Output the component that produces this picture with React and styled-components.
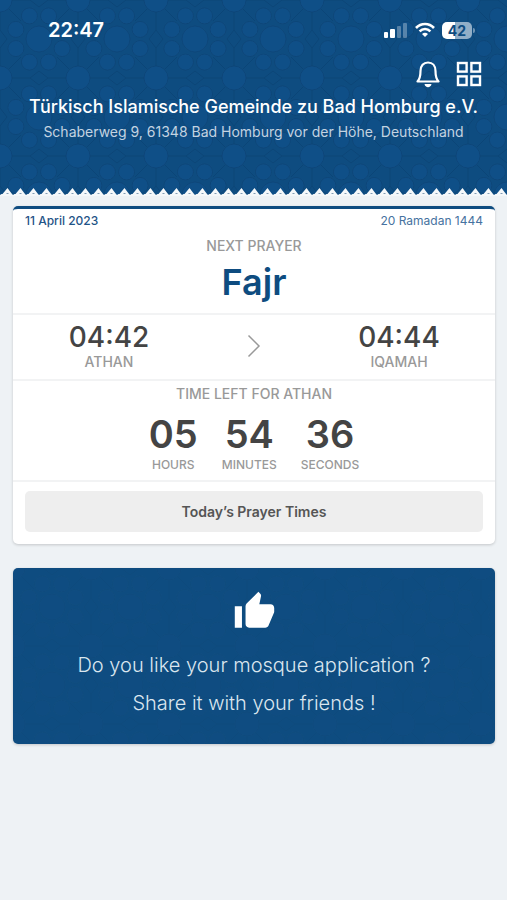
import React from 'react'
import { styled, createGlobalStyle } from 'styled-components';
import { MdThumbUp } from 'react-icons/md';

const countdown = [
  { value: '05', label: 'HOURS' },
  { value: '54', label: 'MINUTES' },
  { value: '36', label: 'SECONDS' },
];

// big rosette in the middle of the tile, small ones around it
const ring = Array.from({ length: 8 }, (_, i) => {
  const a = (i * Math.PI) / 4 + Math.PI / 8;
  return { x: 39 + Math.cos(a) * 25, y: 39 + Math.sin(a) * 25 };
});

const Pattern = ({ id, opacity }) => (
  <PatternSvg aria-hidden="true">
    <defs>
      <pattern id={id} width="78" height="78" patternUnits="userSpaceOnUse">
        <g fill="#125390" fillOpacity={opacity} stroke="#083a68" strokeOpacity={opacity}>
          <circle cx="39" cy="39" r="13" />
          {ring.map((c) => <circle key={`${c.x}-${c.y}`} cx={c.x} cy={c.y} r="8" />)}
          <circle cx="0" cy="0" r="12" />
          <circle cx="78" cy="0" r="12" />
          <circle cx="0" cy="78" r="12" />
          <circle cx="78" cy="78" r="12" />
          <path d="M0 12v18l7 9-7 9v18M78 12v18l-7 9 7 9v18M12 0h18l9 7 9-7h18M12 78h18l9-7 9 7h18M9 9l12 12M69 9L57 21M9 69l12-12M69 69L57 57" fill="none" />
        </g>
      </pattern>
    </defs>
    <rect width="100%" height="100%" fill={`url(#${id})`} />
  </PatternSvg>
);

const Signal = () => (
  <svg width="24" height="16" viewBox="0 0 24 16" fill="#fff" aria-hidden="true">
    <rect x="0" y="10" width="4" height="6" rx="1" />
    <rect x="6" y="7" width="5" height="9" rx="1" />
    <rect x="13" y="4" width="4" height="12" rx="1" opacity="0.3" />
    <rect x="19" y="1" width="4" height="15" rx="1" opacity="0.3" />
  </svg>
);

const Wifi = () => (
  <svg width="20" height="16" viewBox="0 0 20 16" fill="none" stroke="#fff" strokeWidth="2.6" aria-hidden="true">
    <path d="M1 6C6 .6 14 .6 19 6" />
    <path d="M4.6 9.4C7.8 6.2 12.2 6.2 15.4 9.4" />
    <path d="M7 12Q10 9.6 13 12L10 15Z" fill="#fff" stroke="none" />
  </svg>
);

const Bell = () => (
  <svg width="24" height="28" viewBox="1 0 24 28" fill="none" stroke="#fff" strokeWidth="2.2" strokeLinejoin="round" aria-hidden="true">
    <path d="M2.500 21.500C4.800 19 5.500 17 5.500 11C5.500 5.500 8.500 2.500 13 2.500S20.500 5.500 20.500 11C20.500 17 21.200 19 23.500 21.500Z" />
    <path d="M9.500 24H16.500C16 28.200 10 28.200 9.500 24Z" fill="#fff" stroke="none" />
  </svg>
);

const Grid = () => (
  <svg width="26" height="26" viewBox="0 0 26 26" fill="none" stroke="#fff" strokeWidth="2.4" aria-hidden="true">
    <rect x="2" y="2" width="8.600" height="8.600" />
    <rect x="15.400" y="2" width="8.600" height="8.600" />
    <rect x="2" y="15.400" width="8.600" height="8.600" />
    <rect x="15.400" y="15.400" width="8.600" height="8.600" />
  </svg>
);

const Lace = () => (
  <LaceSvg aria-hidden="true">
    <defs>
      <pattern id="lace" width="13" height="8" patternUnits="userSpaceOnUse">
        <path d="M0 7L1.500 6L2.500 6L7.500 0L12 6L13 7V8H0Z" fill="#f5f8fa" />
        <path d="M6.500 5h2v1h-2z" fill="#7f9ab2" />
      </pattern>
    </defs>
    <rect width="100%" height="8" fill="url(#lace)" />
  </LaceSvg>
);

const App = () => {
  return (
    <Page>
      <GlobalStyle />
      <Header>
        <Pattern id="header-pattern" opacity="0.4" />
        <StatusBar>
          <Clock>22:47</Clock>
          <StatusIcons>
            <Signal />
            <Wifi />
            <Battery>42</Battery>
          </StatusIcons>
        </StatusBar>
        <Actions>
          <IconButton aria-label="Notifications"><Bell /></IconButton>
          <IconButton aria-label="Menu"><Grid /></IconButton>
        </Actions>
        <Title>Türkisch Islamische Gemeinde zu Bad Homburg e.V.</Title>
        <Address>Schaberweg 9, 61348 Bad Homburg vor der Höhe, Deutschland</Address>
        <Lace />
      </Header>
      <Main>
        <Card>
          <Dates>
            <Today>11 April 2023</Today>
            <Hijri>20 Ramadan 1444</Hijri>
          </Dates>
          <Next>
            <Label>NEXT PRAYER</Label>
            <Prayer>Fajr</Prayer>
          </Next>
          <Times>
            <Slot>
              <Time>04:42</Time>
              <Label>ATHAN</Label>
            </Slot>
            <svg width="14" height="24" viewBox="0 0 14 24" fill="none" stroke="#999" strokeWidth="1.500" aria-hidden="true">
              <path d="M1.500 1.500L12 12L1.500 22.500" />
            </svg>
            <Slot>
              <Time>04:44</Time>
              <Label>IQAMAH</Label>
            </Slot>
          </Times>
          <Left>
            <Label>TIME LEFT FOR ATHAN</Label>
            <Countdown>
              {countdown.map((c) => (
                <Unit key={c.label}>
                  <Digits>{c.value}</Digits>
                  <UnitLabel>{c.label}</UnitLabel>
                </Unit>
              ))}
            </Countdown>
          </Left>
          <Footer>
            <TimesButton>Today’s Prayer Times</TimesButton>
          </Footer>
        </Card>
        <Share>
          <Pattern id="share-pattern" opacity="0.1" />
          <MdThumbUp size={43} />
          <ShareText>Do you like your mosque application ?</ShareText>
          <ShareText>Share it with your friends !</ShareText>
        </Share>
      </Main>
    </Page>
  )
};

const GlobalStyle = createGlobalStyle`
  * {
    box-sizing: border-box;
  }
  body {
    margin: 0;
    background: #eef2f5;
    font-family: Inter, "Liberation Sans", sans-serif;
  }
  button {
    font-family: inherit;
    border: 0;
    padding: 0;
    cursor: pointer;
  }
  svg {
    display: block;
  }
`;

const Page = styled.div`
  min-height: 100vh;
  background: #eef2f5;
`;

const Header = styled.header`
  position: relative;
  display: flex;
  flex-direction: column;
  padding-top: 18px;
  background: #0e4c80;
  color: #fff;
  isolation: isolate;
`;

const PatternSvg = styled.svg`
  position: absolute;
  inset: 0;
  z-index: -1;
  width: 100%;
  height: 100%;
`;

const StatusBar = styled.div`
  display: flex;
  align-items: center;
  justify-content: space-between;
  height: 24px;
  padding: 0 34px 0 48px;
`;

const Clock = styled.span`
  font-size: 20px;
  font-weight: 600;
`;

const StatusIcons = styled.div`
  display: flex;
  align-items: center;
  gap: 7px;
`;

const Battery = styled.span`
  position: relative;
  width: 30px;
  height: 17px;
  margin-right: 1px;
  border-radius: 5px;
  background: linear-gradient(90deg, #fff 42%, #91aec7 42%);
  color: #0e4c80;
  font-size: 14px;
  font-weight: 700;
  line-height: 17px;
  text-align: center;

  &::after {
    content: '';
    position: absolute;
    left: 31px;
    top: 6px;
    width: 2px;
    height: 5px;
    border-radius: 0 2px 2px 0;
    background: #6f95b5;
  }
`;

const Actions = styled.div`
  display: flex;
  justify-content: flex-end;
  align-items: center;
  gap: 16px;
  margin-top: 18px;
  padding-right: 25px;
`;

const IconButton = styled.button`
  background: none;
`;

const Title = styled.h1`
  margin: 7px 0 0;
  font-size: 18px;
  font-weight: 500;
  line-height: 24px;
  text-align: center;
`;

const Address = styled.p`
  margin: 4px 0 0;
  color: #c3d3e1;
  font-size: 14px;
  font-weight: 400;
  line-height: 18px;
  text-align: center;
`;

const LaceSvg = styled.svg`
  width: 100%;
  height: 8px;
  margin-top: 47px;
`;

const Main = styled.main`
  display: flex;
  flex-direction: column;
  gap: 24px;
  padding: 10px 12px 24px 13px;
`;

const Card = styled.section`
  border-top: 3px solid #0e4c80;
  border-radius: 5px;
  background: #fff;
  box-shadow: 0 1px 3px rgba(0, 0, 0, 0.18);
`;

const Dates = styled.div`
  display: flex;
  justify-content: space-between;
  padding: 4px 12px 0;
  color: #1f5487;
  font-size: 12px;
  line-height: 16px;
`;

const Today = styled.span`
  font-weight: 500;
`;

const Hijri = styled.span`
  color: #4672a0;
`;

const Next = styled.div`
  display: flex;
  flex-direction: column;
  align-items: center;
  padding: 8px 0 9px;
`;

const Label = styled.span`
  color: #999;
  font-size: 14px;
  font-weight: 500;
  line-height: 18px;
`;

const Prayer = styled.h2`
  margin: 5px 0 0;
  color: #0e4c80;
  font-size: 36px;
  font-weight: 600;
  line-height: 44px;
`;

const Times = styled.div`
  display: grid;
  grid-template-columns: 1fr auto 1fr;
  align-items: center;
  padding: 6px 0 8px;
  border-top: 2px solid #f2f3f4;
`;

const Slot = styled.div`
  display: flex;
  flex-direction: column;
  align-items: center;

  &:first-child {
    padding-right: 42px;
  }
  &:last-child {
    padding-left: 42px;
  }
`;

const Time = styled.span`
  color: #444;
  font-size: 28px;
  font-weight: 500;
  line-height: 32px;
`;

const Left = styled.div`
  display: flex;
  flex-direction: column;
  align-items: center;
  padding: 4px 0 7px;
  border-top: 2px solid #f2f3f4;
`;

const Countdown = styled.div`
  display: flex;
  gap: 24px;
  margin-top: 8px;
`;

const Unit = styled.div`
  display: flex;
  flex-direction: column;
  align-items: center;
`;

const Digits = styled.span`
  color: #444;
  font-size: 38px;
  font-weight: 600;
  line-height: 46px;
`;

const UnitLabel = styled.span`
  color: #999;
  font-size: 12px;
  font-weight: 500;
  line-height: 16px;
`;

const Footer = styled.div`
  padding: 9px 12px 12px;
  border-top: 2px solid #f2f3f4;
`;

const TimesButton = styled.button`
  width: 100%;
  height: 41px;
  border-radius: 5px;
  background: #eee;
  color: #555;
  font-size: 14px;
  font-weight: 600;
`;

const Share = styled.button`
  position: relative;
  isolation: isolate;
  display: flex;
  flex-direction: column;
  align-items: center;
  padding: 22px 12px;
  border-radius: 5px;
  overflow: hidden;
  background: #0e4c80;
  color: #fff;
  box-shadow: 0 1px 3px rgba(0, 0, 0, 0.18);

  svg + span {
    margin-top: 13px;
  }
`;

const ShareText = styled.span`
  color: #dbe6ef;
  font-size: 20px;
  font-weight: 300;
  line-height: 38px;
`;

export default App
